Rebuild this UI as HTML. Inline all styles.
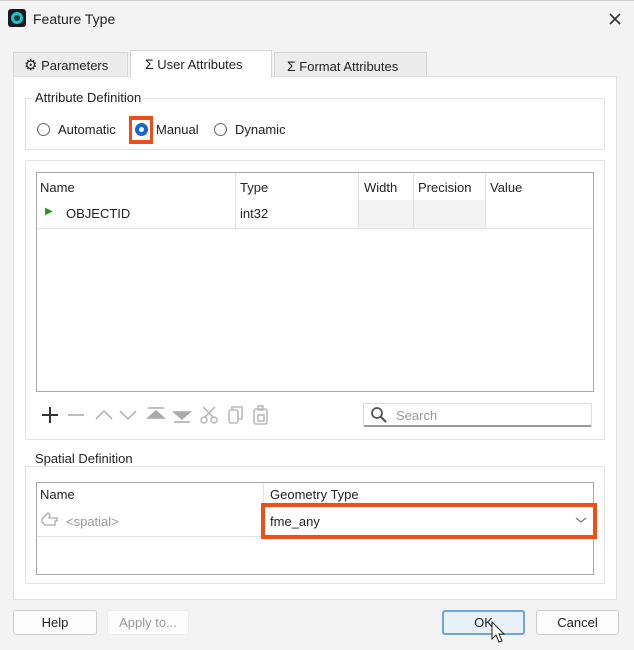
<!DOCTYPE html>
<html><head><style>
*{box-sizing:border-box;margin:0;padding:0}
body{width:634px;height:650px;background:#f3f3f3;font-family:"Liberation Sans",sans-serif;font-size:13px;color:#222;position:relative;overflow:hidden}
.a{position:absolute}
.tab{position:absolute;height:25px;border:1px solid #d6d6d6;border-bottom:none;background:#ececec;padding:5px 0 0 12px;font-size:13px}
.grp{position:absolute;border:1px solid #e3e3e3;border-radius:2px}
.lbl{position:absolute;background:#fff;padding:0 2px;font-size:13px}
.radio{position:absolute;width:13px;height:13px;border:1px solid #666;border-radius:50%;background:#fff}
.btn{position:absolute;height:25px;border:1px solid #ccc;border-radius:3px;background:#fdfdfd;text-align:center;line-height:23px;font-size:13px}
.tbl{position:absolute;border:1px solid #a8a8a8;background:#fff}
.cell{position:absolute;font-size:13px}
</style></head><body>
<div class="a" style="left:0;top:0;width:634px;height:1px;background:#ccc"></div>
<div class="a" style="left:8px;top:9px;width:18px;height:18px;background:#1a1a1a;border-radius:3px"></div>
<div class="a" style="left:11px;top:12px;width:12px;height:12px;border-radius:50%;background:#19c3d6"></div>
<div class="a" style="left:14px;top:15px;width:6px;height:6px;border-radius:50%;background:#0a3a40"></div>
<div class="a" style="left:33px;top:11px;font-size:14px">Feature Type</div>
<svg class="a" style="left:608px;top:12px" width="14" height="14"><path d="M2 2 L12 12 M12 2 L2 12" stroke="#333" stroke-width="1.6"/></svg>

<div class="tab" style="left:13px;top:52px;width:115px;padding-left:10px"><span style="font-size:15px;line-height:13px">⚙</span> Parameters</div>
<div class="tab" style="left:274px;top:52px;width:153px;padding-left:12px"><span style="font-size:14px">Σ</span> Format Attributes</div>
<div class="a" style="left:13px;top:76px;width:604px;height:524px;background:#fff;border:1px solid #e0e0e0"></div>
<div class="tab" style="left:130px;top:50px;width:142px;height:28px;background:#fff;padding-top:5px;padding-left:14px"><span style="font-size:14px">Σ</span> User Attributes</div>

<div class="grp" style="left:25px;top:98px;width:580px;height:52px"></div>
<div class="lbl" style="left:33px;top:90px">Attribute Definition</div>
<div class="radio" style="left:37px;top:123px"></div>
<div class="a" style="left:58px;top:122px">Automatic</div>
<div class="a" style="left:129px;top:116px;width:24px;height:28px;background:#f04e16"></div>
<div class="a" style="left:132px;top:120px;width:18px;height:20px;background:#fff"></div>
<div class="radio" style="left:135px;top:123px;border:4px solid #1466c8"></div>
<div class="a" style="left:156px;top:122px">Manual</div>
<div class="radio" style="left:214px;top:123px"></div>
<div class="a" style="left:235px;top:122px">Dynamic</div>

<div class="grp" style="left:25px;top:160px;width:580px;height:280px"></div>
<div class="tbl" style="left:36px;top:172px;width:558px;height:220px"></div>
<div class="a" style="left:358px;top:200px;width:127px;height:28px;background:#f3f3f3"></div>
<div class="a" style="left:37px;top:228px;width:556px;height:1px;background:#e3e3e3"></div>
<div class="a" style="left:235px;top:173px;width:1px;height:55px;background:#e3e3e3"></div>
<div class="a" style="left:358px;top:173px;width:1px;height:55px;background:#e3e3e3"></div>
<div class="a" style="left:413px;top:173px;width:1px;height:55px;background:#e3e3e3"></div>
<div class="a" style="left:485px;top:173px;width:1px;height:55px;background:#e3e3e3"></div>
<div class="cell" style="left:40px;top:180px">Name</div>
<div class="cell" style="left:240px;top:180px">Type</div>
<div class="cell" style="left:364px;top:180px">Width</div>
<div class="cell" style="left:418px;top:180px">Precision</div>
<div class="cell" style="left:490px;top:180px">Value</div>
<div class="cell" style="left:45px;top:206px;color:#1f9a1f;font-size:10px">▶</div>
<div class="cell" style="left:66px;top:206px">OBJECTID</div>
<div class="cell" style="left:240px;top:206px">int32</div>

<svg class="a" style="left:38px;top:403px" width="240" height="24">
<path d="M4 12 H20 M12 4 V20" stroke="#333" stroke-width="2"/>
<path d="M30 12 H46" stroke="#bbb" stroke-width="2"/>
<path d="M58 16 L66 8 L74 16" fill="none" stroke="#bbb" stroke-width="1.8"/>
<path d="M82 8 L90 16 L98 8" fill="none" stroke="#bbb" stroke-width="1.8"/>
<path d="M110 5 H126 M110 15 L118 8 L126 15 Z" fill="#aaa" stroke="#aaa" stroke-width="1.5"/>
<path d="M136 19 H152 M136 9 L144 16 L152 9 Z" fill="#aaa" stroke="#aaa" stroke-width="1.5"/>
<g fill="none" stroke="#bbb" stroke-width="1.6"><circle cx="166" cy="17" r="3"/><circle cx="176" cy="17" r="3"/><path d="M167 14 L177 4 M175 14 L165 4"/>
<rect x="191" y="7" width="9" height="13" rx="2"/><path d="M194 7 V4 H204 V16 H200"/>
<rect x="216" y="6" width="13" height="15" rx="2"/><rect x="220" y="3" width="5" height="4"/><rect x="220" y="12" width="6" height="6"/></g>
</svg>
<div class="a" style="left:363px;top:403px;width:229px;height:24px;border:1px solid #ddd;border-bottom:2px solid #999;border-radius:2px"></div>
<svg class="a" style="left:370px;top:406px" width="18" height="18"><circle cx="7" cy="7" r="5" fill="none" stroke="#555" stroke-width="1.8"/><line x1="11" y1="11" x2="16" y2="16" stroke="#555" stroke-width="2.2"/></svg>
<div class="a" style="left:396px;top:408px;color:#999">Search</div>

<div class="grp" style="left:25px;top:466px;width:580px;height:118px"></div>
<div class="lbl" style="left:33px;top:451px;background:transparent">Spatial Definition</div>
<div class="tbl" style="left:36px;top:482px;width:558px;height:93px"></div>
<div class="a" style="left:263px;top:483px;width:1px;height:53px;background:#e3e3e3"></div>
<div class="a" style="left:37px;top:536px;width:556px;height:1px;background:#e3e3e3"></div>
<div class="cell" style="left:40px;top:487px">Name</div>
<div class="cell" style="left:270px;top:487px">Geometry Type</div>
<svg class="a" style="left:40px;top:510px" width="20" height="18"><path d="M2 9 L8 3 L10 5 L9 8 H17 V11 H15 V15 H5 L2 12 Z" fill="none" stroke="#aaa" stroke-width="1.3"/></svg>
<div class="cell" style="left:66px;top:514px;color:#999">&lt;spatial&gt;</div>
<div class="a" style="left:261px;top:503px;width:336px;height:36px;border:4px solid #f04e16"></div>
<div class="cell" style="left:270px;top:514px">fme_any</div>
<svg class="a" style="left:575px;top:516px" width="12" height="8"><path d="M1 2 L6 6 L11 2" fill="none" stroke="#777" stroke-width="1.2"/></svg>

<div class="btn" style="left:13px;top:610px;width:84px">Help</div>
<div class="btn" style="left:107px;top:610px;width:82px;color:#999;border-color:#eee">Apply to...</div>
<div class="btn" style="left:442px;top:610px;width:83px;border:2px solid #6aa6dc;background:#e8f0f8;line-height:21px">OK</div>
<div class="btn" style="left:536px;top:610px;width:83px">Cancel</div>
<svg class="a" style="left:490px;top:621px" width="16" height="24"><path d="M2 1 L2 18 L6 14 L9 21 L12 20 L9 13 L14 13 Z" fill="#fff" stroke="#222" stroke-width="1"/></svg>
</body></html>
